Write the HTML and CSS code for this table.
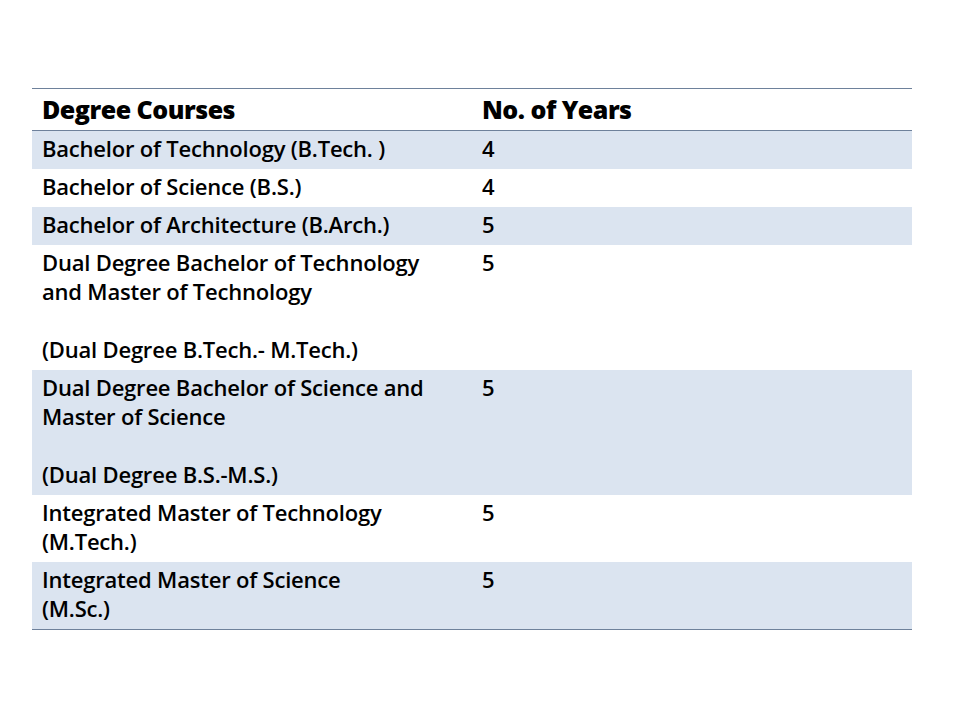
FILE: index.html
```html
<!DOCTYPE html>
<html>
<head>
<meta charset="utf-8">
<link rel="stylesheet" href="styles.css">
</head>
<body>
<div class="slide">
  <table class="courses">
    <thead>
      <tr><th class="c1">Degree Courses</th><th class="c2">No. of Years</th></tr>
    </thead>
    <tbody>
      <tr class="band"><td>Bachelor of Technology (B.Tech. )</td><td>4</td></tr>
      <tr><td>Bachelor of Science (B.S.)</td><td>4</td></tr>
      <tr class="band"><td>Bachelor of Architecture (B.Arch.)</td><td>5</td></tr>
      <tr><td>Dual Degree Bachelor of Technology<br>and Master of Technology<br><br>(Dual Degree B.Tech.- M.Tech.)</td><td>5</td></tr>
      <tr class="band"><td>Dual Degree Bachelor of Science and<br>Master of Science<br><br>(Dual Degree B.S.-M.S.)</td><td>5</td></tr>
      <tr><td>Integrated Master of Technology<br>(M.Tech.)</td><td>5</td></tr>
      <tr class="band"><td>Integrated Master of Science<br>(M.Sc.)</td><td>5</td></tr>
    </tbody>
  </table>
</div>
</body>
</html>
```
FILE: styles.css
```css
html, body {
  margin: 0;
  padding: 0;
  background: #ffffff;
}
.slide {
  width: 960px;
  height: 720px;
  padding: 88px 0 0 32px;
  box-sizing: border-box;
}
.courses {
  width: 880px;
  border-collapse: collapse;
  font-family: "Open Sans", "Noto Sans", sans-serif;
  color: #000;
}
.courses thead tr {
  border-top: 1px solid #6e819b;
  border-bottom: 1px solid #6e819b;
}
.courses th {
  text-align: left;
  font-weight: 800;
  font-size: 25px;
  letter-spacing: -0.5px;
  height: 42px;
  padding: 0 10px 2px;
  box-sizing: border-box;
  vertical-align: middle;
}
.courses th.c1 { width: 440px; }
.courses td {
  font-weight: 600;
  font-size: 22px;
  letter-spacing: -0.2px;
  line-height: 29px;
  padding: 3px 10px 6px;
  vertical-align: top;
}
.courses tr.band td {
  background: #dbe4f0;
}
.courses tbody tr:last-child {
  border-bottom: 1px solid #6e819b;
}
```
